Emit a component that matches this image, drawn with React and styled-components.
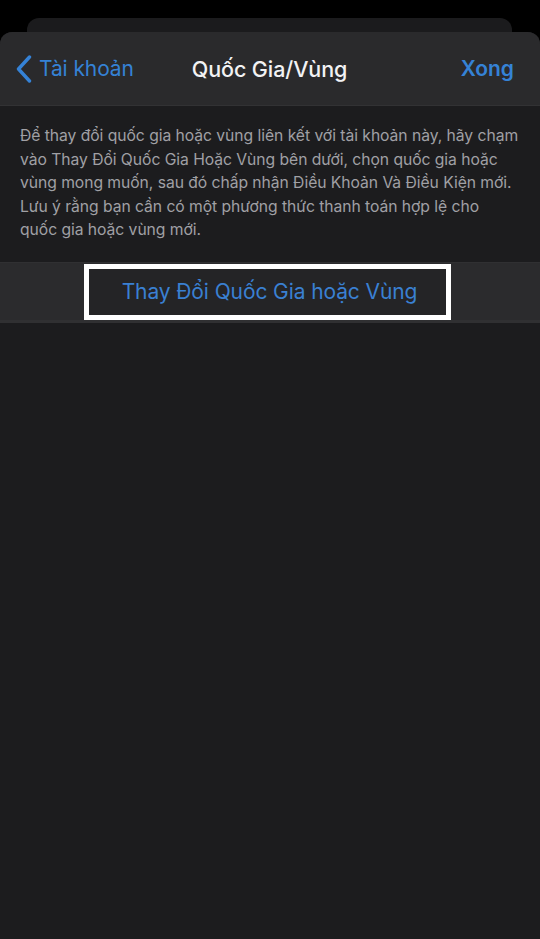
import React from "react";
import styled, { createGlobalStyle } from "styled-components";

const GlobalStyle = createGlobalStyle`
  html, body {
    margin: 0;
    padding: 0;
    background: #000;
  }
  body {
    font-family: Inter, "Noto Sans", "Liberation Sans", sans-serif;
    -webkit-font-smoothing: antialiased;
  }
`;

const Screen = styled.div`
  width: 540px;
  height: 939px;
  background: #000;
  display: flex;
  flex-direction: column;
  overflow: hidden;
`;

const StatusBar = styled.div`
  height: 18px;
  flex-shrink: 0;
`;

const BackSheet = styled.div`
  height: 14px;
  margin: 0 28px 0 27px;
  background: #1b1b1d;
  border-radius: 12px 12px 0 0;
  flex-shrink: 0;
`;

const Sheet = styled.div`
  flex: 1;
  display: flex;
  flex-direction: column;
  background: #1c1c1e;
  border-radius: 12px 12px 0 0;
  overflow: hidden;
`;

const NavBar = styled.div`
  height: 73px;
  flex-shrink: 0;
  background: #2a2a2c;
  border-bottom: 1px solid #323234;
  display: grid;
  grid-template-columns: 1fr auto 1fr;
  align-items: center;
  padding: 0 26px 0 16px;
`;

const BackLink = styled.div`
  display: flex;
  align-items: center;
  gap: 7px;
  color: #3582d6;
  font-size: 21px;
  letter-spacing: -0.1px;
`;

const Title = styled.div`
  margin-left: 9px;
  color: #f2f2f4;
  font-size: 21.5px;
  font-weight: 500;
  letter-spacing: -0.1px;
`;

const Done = styled.div`
  justify-self: end;
  color: #3582d6;
  font-size: 21px;
  font-weight: 600;
`;

const Note = styled.p`
  margin: 0;
  padding: 18px 16px 20px 20px;
  color: #a0a0a5;
  font-size: 15.7px;
  line-height: 23.5px;
  letter-spacing: -0.05px;
  white-space: nowrap;
`;

const ActionRow = styled.div`
  height: 57px;
  flex-shrink: 0;
  background: #2b2b2d;
  border-top: 1px solid #303032;
  border-bottom: 3px solid #303032;
  display: flex;
  align-items: center;
`;

const Highlight = styled.div`
  margin-left: 84px;
  margin-top: 1px;
  width: 367px;
  height: 56px;
  box-sizing: border-box;
  border: 5px solid #ffffff;
  background: #242426;
  display: flex;
  align-items: center;
  justify-content: center;
  padding-left: 4px;
`;

const ActionText = styled.span`
  color: #3a80d2;
  font-size: 21px;
  letter-spacing: -0.1px;
`;

function Chevron() {
  return (
    <svg width="16" height="28" viewBox="0 0 16 28">
      <polyline
        points="13.5,2 2.5,14 13.5,26"
        fill="none"
        stroke="#3582d6"
        strokeWidth="3.4"
        strokeLinecap="round"
        strokeLinejoin="round"
      />
    </svg>
  );
}

export default function App() {
  return (
    <Screen>
      <GlobalStyle />
      <StatusBar />
      <BackSheet />
      <Sheet>
        <NavBar>
          <BackLink>
            <Chevron />
            Tài khoản
          </BackLink>
          <Title>Quốc Gia/Vùng</Title>
          <Done>Xong</Done>
        </NavBar>
        <Note>
          Để thay đổi quốc gia hoặc vùng liên kết với tài khoản này, hãy chạm
          <br />
          vào Thay Đổi Quốc Gia Hoặc Vùng bên dưới, chọn quốc gia hoặc
          <br />
          vùng mong muốn, sau đó chấp nhận Điều Khoản Và Điều Kiện mới.
          <br />
          Lưu ý rằng bạn cần có một phương thức thanh toán hợp lệ cho
          <br />
          quốc gia hoặc vùng mới.
        </Note>
        <ActionRow>
          <Highlight>
            <ActionText>Thay Đổi Quốc Gia hoặc Vùng</ActionText>
          </Highlight>
        </ActionRow>
      </Sheet>
    </Screen>
  );
}
